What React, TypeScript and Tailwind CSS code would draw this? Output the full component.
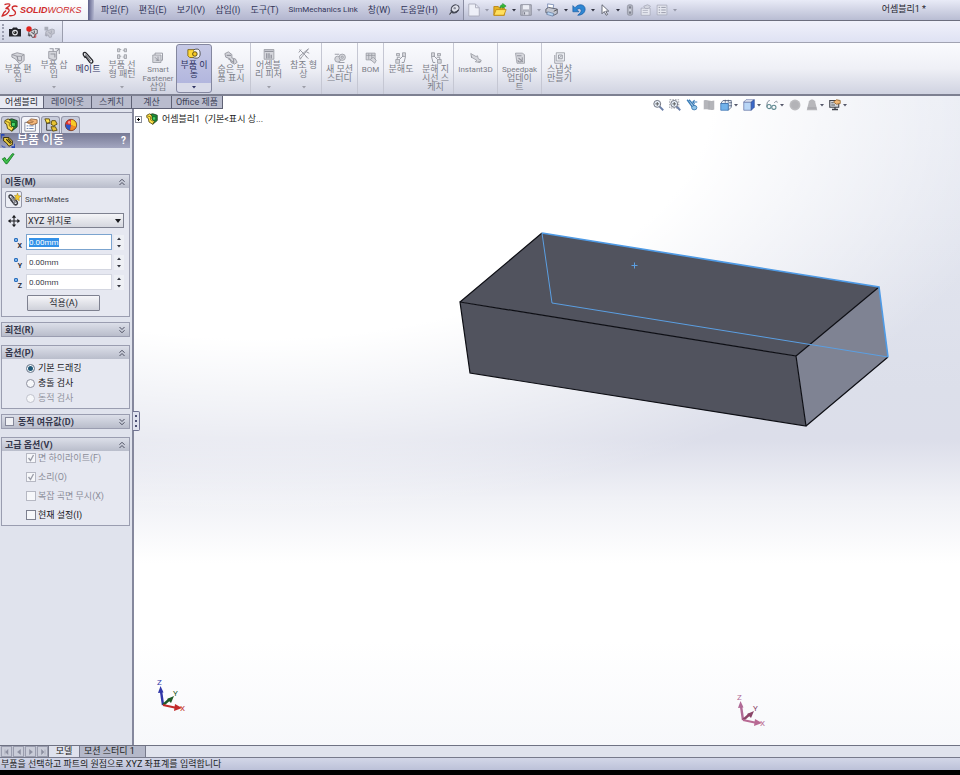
import React, { useEffect, useRef, useState } from 'react';

type IconProps = { className?: string };

const Svg = ({ className = 'size-3', children }: { className?: string; children: React.ReactNode }) => (
  <svg viewBox="0 0 16 16" className={`shrink-0 ${className}`} fill="none" aria-hidden="true">
    {children}
  </svg>
);

const Caret = ({ className = 'text-[#55586a]' }: IconProps) => (
  <svg viewBox="0 0 4 3" className={`h-[3px] w-1 shrink-0 ${className}`} aria-hidden="true">
    <path d="M0 0h4L2 2.5z" fill="currentColor" />
  </svg>
);

/* ---------- title bar icons ---------- */

const PinIcon = () => (
  <Svg>
    <path d="M2 14l4-5" stroke="#333" strokeWidth="1.4" />
    <ellipse cx="9.5" cy="6" rx="5.5" ry="4.5" transform="rotate(-35 9.5 6)" fill="#dfe1ea" stroke="#444754" strokeWidth="1.3" />
    <path d="M4 8c1 5 7 5 10 0" stroke="#444754" strokeWidth="1.8" />
    <circle cx="9" cy="5.5" r="1.6" fill="#8a8d9a" />
  </Svg>
);

const NewIcon = () => (
  <Svg className="h-3.5 w-3">
    <path d="M1 0h9l5 5v11H1z" fill="#eef0f8" stroke="#a9acbb" strokeWidth="1.2" />
    <path d="M10 0v5h5" stroke="#a9acbb" strokeWidth="1.2" />
  </Svg>
);

const OpenIcon = () => (
  <Svg className="size-3.5">
    <path d="M1 4h5l1 1.5h6V14H1z" fill="#e6b422" stroke="#b98412" />
    <path d="M3.5 7.500H15L12.500 14H1z" fill="#ffe05e" stroke="#c08c14" />
    <path d="M8 6c0-3 1-4 3-4V.5L15 3.5 11 6V4.500C9.500 4.500 9 5 8 6z" fill="#35b93a" stroke="#1b8a25" strokeWidth=".6" />
  </Svg>
);

const SaveIcon = () => (
  <Svg>
    <path d="M1 1h14v14H1z" fill="#b9bbc6" stroke="#8d909d" strokeWidth="1.3" />
    <path d="M4 1.5h8v5.5H4z" fill="#eceef5" />
    <path d="M4 9.5h8V15H4z" fill="#d9dbe4" stroke="#8d909d" strokeWidth=".8" />
    <path d="M6 11v3" stroke="#777a88" strokeWidth="1.5" />
  </Svg>
);

const PrintIcon = () => (
  <Svg className="size-3.5">
    <path d="M3 1l7 1-1 5-6-1z" fill="#fff" stroke="#7a8db5" />
    <path d="M1 7l3-2 10 2v5l-4 2-9-3z" fill="#c3c6d0" stroke="#555866" />
    <path d="M3 10l7 2-1 3-7-2z" fill="#b8d5f2" stroke="#62779c" strokeWidth=".8" />
    <path d="M10 9.5l4-2" stroke="#444" />
  </Svg>
);

const UndoIcon = () => (
  <Svg className="size-3.5">
    <path d="M1 3v7h7L5.600 7.600C7 6 10.500 6 10.500 8.500c0 2-1.500 3.500-4 5.500 5 0 8.500-3 8.500-7C15 1.500 7.500 0 3.400 5.400z" fill="#2e86d2" stroke="#1b5ca3" strokeWidth=".8" />
  </Svg>
);

const CursorIcon = () => (
  <Svg className="h-3.5 w-3">
    <path d="M4 1v12l3-3 2.5 5 2-1L9 9.5h4z" fill="#fff" stroke="#5a5d6b" strokeWidth="1.2" />
  </Svg>
);

const TrafficIcon = () => (
  <Svg>
    <rect x="4.5" y="1" width="7" height="14" rx="2.5" fill="#b0b3bf" stroke="#8b8e9b" />
    <circle cx="8" cy="4.5" r="1.5" fill="#7e818e" />
    <circle cx="8" cy="8" r="1.5" fill="#d5d7e0" />
    <circle cx="8" cy="11.5" r="1.5" fill="#7e818e" />
  </Svg>
);

const PropsIcon = () => (
  <Svg>
    <path d="M1.500 5.500h12V15h-12z" fill="#e6e8f0" stroke="#a4a7b5" />
    <path d="M3.500 8.500h7M3.500 11.500h7M5 3l5-2 4 2-3 3H7z" stroke="#a4a7b5" fill="#d3d5df" />
  </Svg>
);

const ListIcon = () => (
  <Svg>
    <path d="M1.500 1.500h13v13h-13z" stroke="#a4a7b5" fill="#e6e8f0" />
    <path d="M3.500 4.500h2M3.500 8h2M3.500 11.500h2M7 4.500h6M7 8h6M7 11.500h6" stroke="#8f92a1" strokeWidth="1.2" />
  </Svg>
);

/* ---------- macro bar icons ---------- */

const CameraIcon = () => (
  <Svg>
    <path d="M0 4h4l1.500-2h5L12 4h4v10H0z" fill="#23242a" />
    <circle cx="8" cy="8.800" r="3.800" fill="#e6e7ec" />
    <circle cx="8" cy="8.800" r="2.300" fill="#222" />
    <circle cx="7.300" cy="8" r=".8" fill="#fff" />
  </Svg>
);

const RecordIcon = ({ gray = false }: { gray?: boolean }) => (
  <Svg>
    <path d="M4 7l8-3 3 1v5l-3 1-1 4H8l-1-3-4 1z" fill={gray ? '#c5c7d1' : '#d9d9dd'} stroke={gray ? '#a0a3b0' : '#35363c'} />
    <path d="M7 8l4 3M11 6v4M5 10v4" stroke={gray ? '#a0a3b0' : '#35363c'} strokeWidth="1.2" />
    {gray ? <path d="M2 1h5v5H2z" fill="#a9acb8" /> : <circle cx="4" cy="4" r="3.6" fill="#e0221d" />}
    {!gray && <path d="M13 11v4h-3" stroke="#c22" />}
  </Svg>
);

/* ---------- ribbon icons ---------- */

const G = '#93959e';
const L = '#d5d6dc';

const EditPartIcon = () => (
  <Svg className="size-3.5">
    <path d="M1 4l6-2 8 2v7l-5 4-5-6-4-2z" fill={L} stroke={G} />
    <path d="M7 6h5v5H8zM1 4l6 2 1 5M12 6l3-2" stroke={G} />
  </Svg>
);

const InsertPartIcon = () => (
  <Svg className="size-3.5">
    <path d="M2 5h9v9l-3 1-6-2z" fill={L} stroke={G} />
    <path d="M3 2h4v3M9 2h5v6M4 8h5v4M11 5l3-3" stroke={G} strokeWidth="1.2" />
  </Svg>
);

const MateIcon = () => (
  <Svg className="size-3.5">
    <path d="M5 8L3 5c-1.500-3 1.500-4.500 3-2.500l7 8c1.500 2.500-1 4.500-3 2.500L5 6" stroke="#26272c" strokeWidth="1.500" />
    <path d="M5 4l6 7.500" stroke="#77797f" strokeWidth="1.500" />
  </Svg>
);

const PatternIcon = () => (
  <Svg>
    <path d="M2 1h3v4H2zM11 1h3v4h-3zM2 9h3v5H2zM11 9h3v5h-3z" fill={L} stroke={G} />
    <path d="M5 2h2M5 11h2M9 3h2M9 12h2" stroke={G} />
  </Svg>
);

const SmartIcon = () => (
  <Svg>
    <path d="M1 4h11v10H1z" fill={L} stroke={G} />
    <path d="M4 4V1.500h10V11h-2M4 7l4 4M8 6v6M5 11h5" stroke={G} strokeWidth="1.200" />
  </Svg>
);

const MoveIcon = () => (
  <Svg className="size-3.5">
    <path d="M1 3h7v9H3l-2-2z" fill="#ffd83b" stroke="#7c6210" />
    <path d="M8 3c6-2 7 1 7 5s-3 6-8 4" fill="#f2f2f2" stroke="#454545" />
    <circle cx="9" cy="8" r="2.600" fill="#f6c926" stroke="#4e3e0a" />
  </Svg>
);

const HiddenIcon = () => (
  <Svg className="size-3.5">
    <path d="M1 3l4-2 4 3v4l4 1 2 4-3 2-4-2-1-4-5-2z" fill={L} stroke={G} />
    <path d="M3 5h5M5 9l6 4M11 9v5" stroke={G} strokeWidth="1.200" />
  </Svg>
);

const FeatureIcon = () => (
  <Svg>
    <path d="M1.500 2h13v13h-13z" fill={L} stroke={G} />
    <path d="M2 4.500h12M5 7v7M8 7v7M11 9v5" stroke={G} strokeWidth="1.800" />
  </Svg>
);

const RefIcon = () => (
  <Svg>
    <path d="M2 2l10 10M14 1L5 12l-2 3-1-4zM10 11l4 3M1 6l3-4M11 5l4 2" stroke={G} strokeWidth="1.200" />
  </Svg>
);

const MotionIcon = () => (
  <Svg>
    <circle cx="5" cy="9.500" r="4" fill={L} stroke={G} />
    <circle cx="11" cy="7" r="4.200" fill={L} stroke={G} />
    <circle cx="11" cy="7" r="1.500" stroke={G} />
    <path d="M6 14h8M1 3h6" stroke={G} strokeWidth="1.200" />
  </Svg>
);

const BomIcon = () => (
  <Svg>
    <path d="M1.500 1.500h12v9h-12z" fill={L} stroke={G} />
    <path d="M1.500 4.500h12M5 2v8M9 2v8" stroke={G} />
    <path d="M7 10l4-3 4 4-2 4z" fill={L} stroke={G} />
  </Svg>
);

const ExplodeIcon = ({ flip = false }: { flip?: boolean }) => (
  <Svg>
    <g transform={flip ? 'translate(16 0) scale(-1 1)' : undefined}>
      <path d="M1 10h5v5H1zM10 1h4v5h-4zM2 2h4v3H2z" fill={L} stroke={G} />
      <path d="M6 10l5-5M7 7H3v3M14 6l-2 8H9" stroke={G} strokeWidth="1.200" />
    </g>
  </Svg>
);

const InstantIcon = () => (
  <Svg>
    <path d="M1 2l7 4 2-1 1 4 4 2-2 3-6-1 2-2-7-4z" fill={L} stroke={G} />
    <path d="M2 5v3M11 13h4" stroke={G} />
  </Svg>
);

const SpeedIcon = () => (
  <Svg>
    <path d="M2 1.500h9l3 2V15H4z" fill={L} stroke={G} />
    <path d="M4 5h6M6 8l6 5M11 7v4M5 11c1 3 4 3 5 1" stroke={G} strokeWidth="1.400" />
  </Svg>
);

const SnapshotIcon = () => (
  <Svg>
    <path d="M3 1h11v11H3z" fill="#eceef3" stroke={G} />
    <path d="M1 4v11h11M6 4h5v5H6zM7 8l3-3" stroke={G} strokeWidth="1.200" />
  </Svg>
);

/* ---------- property manager icons ---------- */

const PartIcon = ({ className = 'size-3.5' }: IconProps) => (
  <Svg className={className}>
    <path d="M5 2l4-1 6 2v7l-6 5-2-5z" fill="#1e8f3b" stroke="#12330f" />
    <path d="M1 3l4-2 3 3v4l3 3-2 4-5-3-1-5-2-1z" fill="#ffe24a" stroke="#4b3d09" />
    <path d="M8.500 5H13v4.500H8.500z" fill="#4ad465" stroke="#0d5a20" />
    <path d="M2 4l4 1v4l3 2" stroke="#7a6412" />
  </Svg>
);

const PropertyIcon = () => (
  <Svg className="size-3.5">
    <path d="M1 5h12v10H1z" fill="#fff" stroke="#7b7e8e" />
    <path d="M3 9h2M6 9h5M3 12h2M6 12h5" stroke="#5873ab" />
    <path d="M3 5l5-4 7 1v4l-6 2z" fill="#f3b67c" stroke="#7b4e24" strokeWidth=".8" />
    <path d="M4 5h6M7 3l4 1" stroke="#7b4e24" strokeWidth=".7" />
  </Svg>
);

const ConfigIcon = () => (
  <Svg className="size-3.5">
    <path d="M3 1v13h6M3 6h4" stroke="#333" />
    <path d="M1 1h5l1 4-4 1z" fill="#ffe24a" stroke="#594808" />
    <path d="M9 3h4l2 4-4 2-3-2zM8 10h5l2 4-5 1z" fill="#e8c334" stroke="#594808" />
  </Svg>
);

const AppearanceIcon = () => (
  <Svg className="size-3.5">
    <circle cx="8" cy="8" r="6.500" fill="#e8322a" />
    <path d="M8 8V1.500a6.500 6.500 0 016 9z" fill="#f6cb27" />
    <path d="M8 8L1.600 7a6.500 6.500 0 005.400 7.400z" fill="#2a55c9" />
    <path d="M8 8l-1 6.400a6.500 6.500 0 007-4z" fill="#f08a26" />
    <circle cx="6" cy="5" r="1.500" fill="#f79a8f" />
    <circle cx="8" cy="8" r="6.500" stroke="#66331f" strokeWidth=".8" />
  </Svg>
);

const HeaderIcon = () => (
  <Svg className="size-3.5">
    <path d="M0 5V1h4M16 11v4h-4" stroke="#2546b5" strokeWidth="1.800" />
    <path d="M3 4h6l4 4v4l-4 2-3-4-3-2z" fill="#f0cf3e" stroke="#2a2309" />
    <path d="M6 6l5 5M8 5l4 5" stroke="#3f3712" strokeWidth="1.300" />
    <path d="M1 13c0 2 2 2 4 2" stroke="#2546b5" />
  </Svg>
);

const CheckIcon = () => (
  <Svg className="size-3.5">
    <path d="M1.500 9l3-1.500L6.500 11 13 3l2 .5L7 14.500H5.500z" fill="#3fc04b" stroke="#137b22" />
  </Svg>
);

const SmartMatesIcon = () => (
  <Svg className="size-3.5">
    <path d="M6 9L2.500 5c-1-2.500 1.500-3.500 3-2l6 7c1.500 2.500-1 4.500-3 3L4 7.500" stroke="#3b3c42" strokeWidth="1.700" />
    <path d="M5 5l5 6M9 5l-1 8" stroke="#7d7f86" strokeWidth="1.400" />
    <path d="M12 0l1 3 3 .5-2.300 2L14 9l-2.500-2L9 8l1-3-1.500-2.300 2.500.1z" fill="#f5cb2c" stroke="#94720e" strokeWidth=".5" />
  </Svg>
);

const FourWayIcon = () => (
  <Svg>
    <path d="M8 1v14M1 8h14" stroke="#1d1e22" strokeWidth="1.400" />
    <path d="M8 0l3 3.500H5zM8 16l3-3.500H5zM0 8l3.500-3v6zM16 8l-3.500-3v6z" fill="#1d1e22" />
  </Svg>
);

const Chevrons = ({ down }: { down: boolean }) => (
  <Svg className={`size-2 ${down ? 'rotate-180' : ''}`}>
    <path d="M3 7.500l5-5 5 5M3 14l5-5 5 5" stroke="#4b4e60" strokeWidth="2" />
  </Svg>
);

/* ---------- heads-up view icons ---------- */

const ZoomIcon = ({ area = false }: { area?: boolean }) => (
  <Svg>
    {area && <path d="M1 1h12v11H1z" stroke="#777a86" strokeDasharray="2 1.500" />}
    <path d="M10 10l5 5" stroke="#6b7fa8" strokeWidth="2.400" />
    <circle cx="7" cy="6.500" r="4.600" fill="#e9f1fa" stroke="#70737f" strokeWidth="1.300" />
    <path d="M7 4v5M4.500 6.500h5" stroke="#555" strokeWidth="1.200" />
  </Svg>
);

const PrevViewIcon = () => (
  <Svg>
    <path d="M1.500 1l8 11M4 1l8 9" stroke="#3d7fb9" strokeWidth="1.800" />
    <ellipse cx="11" cy="11.500" rx="3.500" ry="3" fill="#8fc3e8" stroke="#2f6ea5" />
    <path d="M15 4H9l2.500-2.500M9 4l2.500 2.500" stroke="#3d7fb9" strokeWidth="1.400" />
  </Svg>
);

const SectionIcon = () => (
  <Svg>
    <path d="M1 2c5-2 8 2 14 0v12c-5 2-9-1-14 0z" fill="#b4b5ba" />
    <path d="M8 3v11" stroke="#a2a3a9" />
  </Svg>
);

const OrientIcon = () => (
  <Svg>
    <path d="M4 2h11v9l-4 4V6H1z" fill="#e8eef6" stroke="#4b5a78" />
    <path d="M1 6h10v9H1z" fill="#72b2ea" stroke="#3b71b0" />
    <path d="M7 1v4M11 1v4M12 5h4M12 9h4" stroke="#4b5a78" />
  </Svg>
);

const StyleIcon = () => (
  <Svg>
    <path d="M1 4h10v11H1z" fill="#b9d6f6" stroke="#6877a5" />
    <path d="M1 4l3-3h11l-4 3z" fill="#f2f6fd" stroke="#6877a5" />
    <path d="M11 4l4-3v10l-4 4z" fill="#3867c8" stroke="#34529b" />
  </Svg>
);

const GlassesIcon = () => (
  <Svg>
    <path d="M5 2C1 3 1 7 1.500 11M11 5c3-3 4-2 4 0" stroke="#737f8c" strokeWidth="1.200" />
    <circle cx="4" cy="10" r="2.800" stroke="#5d8890" strokeWidth="1.400" />
    <circle cx="10.500" cy="11" r="2.800" stroke="#5d8890" strokeWidth="1.400" />
  </Svg>
);

const SphereIcon = () => (
  <Svg>
    <circle cx="8" cy="8" r="7.300" fill="#bcbcbf" />
    <circle cx="8" cy="8" r="5" fill="#b3b3b7" />
  </Svg>
);

const SceneIcon = () => (
  <Svg>
    <path d="M4 3c2-3 6-3 8 0l3 12H1z" fill="#b7b7bb" />
    <path d="M2 12h12" stroke="#a3a3a8" strokeWidth="1.500" />
  </Svg>
);

const MonitorIcon = () => (
  <Svg>
    <path d="M1 2h12v9H1z" fill="#d5d8de" stroke="#3f4149" strokeWidth="1.400" />
    <path d="M4 14h8M8 11v3" stroke="#3f4149" strokeWidth="1.800" />
    <path d="M6 4l4-3 5 1v4l-5 1z" fill="#f1b877" stroke="#8a5c26" />
    <path d="M3 5h3M3 8h5" stroke="#333" />
  </Svg>
);

/* ---------- data ---------- */

const menus = ['파일(F)', '편집(E)', '보기(V)', '삽입(I)', '도구(T)', 'SimMechanics Link', '창(W)', '도움말(H)'];

const quickTools = [
  { label: '새 문서', icon: <NewIcon />, caret: 'gray' },
  { label: '열기', icon: <OpenIcon />, caret: 'dark' },
  { label: '저장', icon: <SaveIcon />, caret: 'gray' },
  { label: '인쇄', icon: <PrintIcon />, caret: 'dark' },
  { label: '실행 취소', icon: <UndoIcon />, caret: 'dark' },
  { label: '선택', icon: <CursorIcon />, caret: 'dark' },
  { label: '재생성', icon: <TrafficIcon />, caret: '' },
  { label: '파일 속성', icon: <PropsIcon />, caret: '' },
  { label: '옵션', icon: <ListIcon />, caret: 'gray' },
];

const ribbon = [
  { lines: ['부품 편', '집'], icon: <EditPartIcon />, width: 'w-9' },
  { lines: ['부품 삽', '입'], icon: <InsertPartIcon />, width: 'w-9', drop: true },
  { lines: ['메이트'], icon: <MateIcon />, width: 'w-8', enabled: true },
  { lines: ['부품 선', '형 패턴'], icon: <PatternIcon />, width: 'w-9', drop: true },
  { lines: ['Smart', 'Fastener', '삽입'], icon: <SmartIcon />, width: 'w-9' },
  { lines: ['부품 이', '동'], icon: <MoveIcon />, width: 'w-9', drop: true, active: true, enabled: true },
  { lines: ['숨은 부', '품 표시'], icon: <HiddenIcon />, width: 'w-[38px]', sep: true },
  { lines: ['어셈블', '리 피처'], icon: <FeatureIcon />, width: 'w-[35px]', drop: true },
  { lines: ['참조 형', '상'], icon: <RefIcon />, width: 'w-[35px]', drop: true, sep: true },
  { lines: ['새 모션', '스터디'], icon: <MotionIcon />, width: 'w-[35px]', sep: true },
  { lines: ['BOM'], icon: <BomIcon />, width: 'w-[25px]', sep: true },
  { lines: ['분해도'], icon: <ExplodeIcon />, width: 'w-[34px]' },
  { lines: ['분해 지', '시선 스', '케치'], icon: <ExplodeIcon flip />, width: 'w-[35px]', sep: true },
  { lines: ['Instant3D'], icon: <InstantIcon />, width: 'w-[43px]', sep: true },
  { lines: ['Speedpak', '업데이', '트'], icon: <SpeedIcon />, width: 'w-[43px]', sep: true },
  { lines: ['스냅샷', '만들기'], icon: <SnapshotIcon />, width: 'w-[35px]' },
];

const commandTabs = [
  { label: '어셈블리', width: 'w-[44px]' },
  { label: '레이아웃', width: 'w-12' },
  { label: '스케치', width: 'w-10' },
  { label: '계산', width: 'w-10' },
  { label: 'Office 제품', width: 'w-[51px]' },
];

const viewTools = [
  { label: '전체 보기', icon: <ZoomIcon /> },
  { label: '영역 확대', icon: <ZoomIcon area /> },
  { label: '이전 뷰', icon: <PrevViewIcon /> },
  { label: '단면도', icon: <SectionIcon /> },
  { label: '뷰 방향', icon: <OrientIcon />, drop: true },
  { label: '표시 유형', icon: <StyleIcon />, drop: true },
  { label: '항목 숨기기/보이기', icon: <GlassesIcon />, drop: true },
  { label: '표현 편집', icon: <SphereIcon /> },
  { label: '화면 적용', icon: <SceneIcon />, drop: true },
  { label: '뷰 설정', icon: <MonitorIcon />, drop: true },
];

const managerTabs = [
  { label: 'FeatureManager', icon: <PartIcon /> },
  { label: 'PropertyManager', icon: <PropertyIcon /> },
  { label: 'ConfigurationManager', icon: <ConfigIcon /> },
  { label: 'DisplayManager', icon: <AppearanceIcon /> },
];

/* ---------- top bars ---------- */

const TitleBar = () => (
  <header className="flex h-[21px] items-stretch border-b border-[#6c6e7e] bg-gradient-to-b from-[#e9ebf7] to-[#b9bdd3]">
    <div className="flex w-[88px] shrink-0 items-center gap-0.5 bg-gradient-to-b from-white to-[#f1f1f6] pl-px">
      <svg viewBox="0 0 50 48" className="h-4 w-[17px]" fill="none" stroke="#cf2a2a" strokeWidth="4" aria-hidden="true">
        <path d="M10 8c6-3 17-4 16 1-1 4-8 8-13 11 9-2 14 3 9 10-4 6-11 11-19 12 2-8 6-13 12-16" />
        <path d="M49 14c-8-4-17-1-16 5 1 5 11 7 10 14-1 6-9 9-19 8" />
      </svg>
      <span className="font-['Liberation_Sans'] text-[9px] leading-3 text-[#cf2a2a] italic">
        <b>SOLID</b>WORKS
      </span>
    </div>
    <div className="w-1.5 shrink-0 bg-gradient-to-r from-[#5d6089] to-[#b4b7d0]" />
    <nav className="flex shrink-0 items-center gap-2.5 border-r border-[#8a8da2] bg-gradient-to-b from-[#d8dbea] to-[#b3b6cf] pr-[3px] pl-[7px]">
      {menus.map((menu) => (
        <button key={menu} className={`leading-3 whitespace-nowrap text-[#33365a] ${menu.startsWith('Sim') ? 'text-[8px]' : 'text-[9px]'}`}>
          {menu}
        </button>
      ))}
      <button aria-label="메뉴 고정">
        <PinIcon />
      </button>
    </nav>
    <div className="flex items-center gap-1 pl-1">
      {quickTools.map((tool) => (
        <button key={tool.label} aria-label={tool.label} className="flex items-center gap-[5px]">
          {tool.icon}
          {tool.caret && <Caret className={tool.caret === 'dark' ? 'text-[#2f3140]' : 'text-[#9598a8]'} />}
        </button>
      ))}
    </div>
    <div className="flex flex-1 items-center justify-end pr-[34px] text-[9px] text-[#24252d]">어셈블리1 *</div>
  </header>
);

const MacroBar = () => (
  <div className="flex h-[22px] border-b border-[#a1a3b2] bg-gradient-to-b from-[#f0f1fb] to-[#dfe2f3]">
    <div className="flex w-[63px] items-center gap-[5px] border-r border-[#9b9eae] bg-gradient-to-b from-[#eceef9] to-[#cfd3e3] pl-0.5">
      <div className="h-4 border-l-2 border-dotted border-[#9b9eb0]" />
      <button aria-label="캡처"><CameraIcon /></button>
      <button aria-label="매크로 기록"><RecordIcon /></button>
      <button aria-label="매크로 정지"><RecordIcon gray /></button>
    </div>
  </div>
);

const Ribbon = () => (
  <div className="flex h-[53px] items-stretch border-b-2 border-[#7d8091] bg-gradient-to-b from-[#fafbfe] via-[#eff0f6] to-[#d0d3e1]">
    {ribbon.map((item) => (
      <div key={item.lines.join('')} className={`flex shrink-0 ${item.sep ? 'border-r border-[#c5c7d3]' : ''}`}>
        <button
          className={`flex flex-col items-center text-[9px] leading-[9px] whitespace-nowrap ${item.width} ${
            item.active ? 'my-px rounded-[3px] border border-[#84879f] bg-gradient-to-b from-[#c6c9e6] to-[#aeb2dc] pt-[3px]' : item.drop ? 'pt-[5px]' : 'pt-[9px]'
          } ${item.enabled ? 'text-[#2d3160]' : 'text-[#7b7d87]'}`}
        >
          <span className="flex h-3 items-center">{item.icon}</span>
          <span className="mt-px">
            {item.lines.map((line) => (
              <span key={line} className={`block ${/[a-zA-Z]/.test(line) ? 'text-[8px]' : ''}`}>
                {line}
              </span>
            ))}
          </span>
          {item.drop && (
            <span className={`mt-auto flex w-full justify-center ${item.active ? 'rounded-b-[3px] bg-[#d9dbe9] py-[3px]' : 'pb-[5px]'}`}>
              <Caret className={item.active ? 'text-[#2d3160]' : 'text-[#9c9ea8]'} />
            </span>
          )}
        </button>
      </div>
    ))}
  </div>
);

/* ---------- property manager ---------- */

type GroupProps = {
  title: string;
  open?: boolean;
  check?: boolean;
  children?: React.ReactNode;
};

const Group = ({ title, open = false, check = false, children }: GroupProps) => (
  <section className="border border-[#9a9db0] bg-[#e6e8f1]">
    <div className="flex h-[13px] items-center bg-gradient-to-b from-[#dcdfe9] to-[#b9bdcb] px-[3px]">
      {check ? (
        <label className="flex flex-1 items-center gap-1 text-[9px] leading-3 font-bold text-[#35384c]">
          <input type="checkbox" className="size-[9px] appearance-none border border-[#85889a] bg-[#f0f1f5]" />
          {title}
        </label>
      ) : (
        <h3 className="flex-1 text-[9px] leading-3 font-bold text-[#35384c]">{title}</h3>
      )}
      <button aria-label={`${title} 펼치기`}>
        <Chevrons down={!open} />
      </button>
    </div>
    {open && children}
  </section>
);

const CoordInput = ({ axis, focused = false }: { axis: string; focused?: boolean }) => {
  const ref = useRef<HTMLInputElement>(null);

  useEffect(() => {
    if (focused) {
      ref.current?.focus();
      ref.current?.select();
    }
  }, [focused]);

  return (
    <div className="flex items-center">
      <label htmlFor={`axis-${axis}`} className="flex w-[21px] shrink-0 items-center justify-end pr-1 text-[7px] leading-3 font-bold text-[#2b2d3a]">
        <span className="mb-1 size-1 rounded-[1px] border border-[#2c6fbd] bg-[#7fb6ea]" />
        <span className="mt-2 leading-1">{axis}</span>
      </label>
      <input
        id={`axis-${axis}`}
        ref={ref}
        defaultValue="0.00mm"
        className={`h-4 w-0 flex-1 border bg-white px-0.5 text-[8px] leading-3 text-[#3c3e4a] outline-none selection:bg-[#3391e8] selection:text-white ${
          focused ? 'border-[#7ba4cf]' : 'border-[#d3d6e0]'
        }`}
      />
      <div className="ml-0.5 flex h-[15px] w-2.5 flex-col items-center justify-between bg-[#eef0f5] py-0.5">
        <button aria-label={`${axis} 증가`}><Caret className="rotate-180 text-[#33353f]" /></button>
        <button aria-label={`${axis} 감소`}><Caret className="text-[#33353f]" /></button>
      </div>
    </div>
  );
};

const dragModes = [
  { label: '기본 드래깅', disabled: false },
  { label: '충돌 검사', disabled: false },
  { label: '동적 검사', disabled: true },
];

const advanced = [
  { label: '면 하이라이트(F)', checked: true, disabled: true },
  { label: '소리(O)', checked: true, disabled: true },
  { label: '복잡 곡면 무시(X)', checked: false, disabled: true },
  { label: '현재 설정(I)', checked: false, disabled: false },
];

const PropertyPanel = () => {
  const [mode, setMode] = useState('기본 드래깅');

  return (
    <aside className="relative z-10 flex w-[134px] shrink-0 flex-col border-r-2 border-[#85889d] bg-[#e0e3ed] pt-4">
      <div className="flex gap-px border-t border-[#8d90a3] px-px pt-[3px]">
        {managerTabs.map((tab, index) => (
          <button
            key={tab.label}
            aria-label={tab.label}
            className={`flex h-[17px] w-[19px] items-center justify-center rounded-t-[3px] border border-b-0 border-[#9497aa] ${
              index === 1 ? 'bg-[#f4f5fa]' : 'bg-[#c8ccdb]'
            }`}
          >
            {tab.icon}
          </button>
        ))}
      </div>
      <div className="mr-0.5 flex h-[15px] items-center gap-0.5 bg-gradient-to-b from-[#777a95] to-[#a3a6c0] pl-px">
        <HeaderIcon />
        <h2 className="flex-1 text-[12px] leading-[15px] font-medium text-white">부품 이동</h2>
        <button aria-label="도움말" className="pr-1 text-[10px] leading-3 font-bold text-white">?</button>
      </div>
      <div className="flex h-[26px] items-start pt-[3px] pl-px">
        <button aria-label="확인"><CheckIcon /></button>
      </div>

      <div className="flex flex-col gap-[5px] pr-0.5 pl-px">
        <Group title="이동(M)" open>
          <div className="flex flex-col pt-[3px] pb-[5px]">
            <div className="flex items-center gap-[3px] pl-[3px]">
              <button aria-label="SmartMates" className="flex size-[17px] items-center justify-center rounded-[2px] border border-[#9598a8] bg-[#eceef5]">
                <SmartMatesIcon />
              </button>
              <span className="text-[8px] leading-3 text-[#3c3e4a]">SmartMates</span>
            </div>
            <div className="mt-[5px] flex items-center gap-[6px] pr-[5px] pl-[6px]">
              <FourWayIcon />
              <div className="relative flex-1">
                <select
                  aria-label="이동 방법"
                  className="block h-[15px] w-full appearance-none border border-[#7e8190] bg-gradient-to-b from-[#f5f5f8] to-[#d5d7df] pl-px text-[9px] leading-3 text-[#26272f]"
                >
                  <option>XYZ 위치로</option>
                </select>
                <svg viewBox="0 0 6 4" className="pointer-events-none absolute top-[6px] right-[3px] h-1 w-1.5" aria-hidden="true">
                  <path d="M0 0h6L3 4z" fill="#17181c" />
                </svg>
              </div>
            </div>
            <div className="mt-1.5 flex flex-col gap-1 pr-[5px] pl-[3px]">
              <CoordInput axis="X" focused />
              <CoordInput axis="Y" />
              <CoordInput axis="Z" />
            </div>
            <button className="mt-[5px] ml-[25px] h-4 w-[73px] rounded-[1px] border border-[#7e8190] bg-gradient-to-b from-[#f6f6f9] to-[#cfd1da] text-[9px] leading-3 text-[#26272f]">
              적용(A)
            </button>
          </div>
        </Group>

        <Group title="회전(R)" />

        <div className="pt-[3px]">
          <Group title="옵션(P)" open>
            <div className="flex flex-col gap-[3px] pt-[3px] pb-1 pl-6">
              {dragModes.map(({ label, disabled }) => (
                <label key={label} className={`flex items-center gap-[3px] text-[9px] leading-3 ${disabled ? 'text-[#9193a0]' : 'text-[#16171c]'}`}>
                  <input
                    type="radio"
                    name="drag"
                    disabled={disabled}
                    checked={mode === label}
                    onChange={() => setMode(label)}
                    className="size-[9px] appearance-none rounded-full border border-[#8e919f] bg-[#f6f7fa] checked:bg-[#1e5878] checked:ring-1 checked:ring-white checked:ring-inset disabled:border-[#c0c2cc]"
                  />
                  {label}
                </label>
              ))}
            </div>
          </Group>
        </div>

        <Group title="동적 여유값(D)" check />

        <div className="pt-[3px]">
          <Group title="고급 옵션(V)" open>
            <div className="flex flex-col gap-[7px] pt-px pb-1 pl-6">
              {advanced.map(({ label, checked, disabled }) => (
                <label key={label} className={`flex items-center gap-0.5 text-[9px] leading-3 ${disabled ? 'text-[#8b8d99]' : 'text-[#16171c]'}`}>
                  <span className="relative size-[10px]">
                    <input
                      type="checkbox"
                      defaultChecked={checked}
                      disabled={disabled}
                      className="peer block size-[10px] appearance-none border border-[#7d808f] bg-[#f6f7fa] disabled:border-[#b6b8c3]"
                    />
                    <svg viewBox="0 0 10 10" className="pointer-events-none absolute inset-0 hidden size-[10px] peer-checked:block" aria-hidden="true">
                      <path d="M2.500 5l2 2.500 3-5.500" fill="none" stroke="#9a9ca8" strokeWidth="1.300" />
                    </svg>
                  </span>
                  {label}
                </label>
              ))}
            </div>
          </Group>
        </div>
      </div>

      {/* splitter grip */}
      <button
        aria-label="패널 접기"
        className="absolute top-[315px] -right-2 flex h-5 w-[7px] flex-col items-center justify-center gap-[3px] rounded-r-[2px] border border-l-0 border-[#6f7291] bg-[#dfe2ee]"
      >
        <span className="size-0.5 bg-[#4d5175]" />
        <span className="size-0.5 bg-[#4d5175]" />
        <span className="size-0.5 bg-[#4d5175]" />
      </button>
    </aside>
  );
};

/* ---------- graphics area ---------- */

const Triad = ({ x, y, colors }: { x: number; y: number; colors: string[] }) => {
  const [cx, cy, cz] = colors;
  return (
    <g transform={`translate(${x} ${y})`} className="text-[8px]">
      <path d="M0 0l-2-14" stroke={cz} strokeWidth="2.400" />
      <path d="M-5-12l2.500-7 3 6.500z" fill={cz} />
      <path d="M0 0l7-6" stroke={cy} strokeWidth="2.400" />
      <path d="M4-6l7-3-3 7z" fill={cy} />
      <path d="M0 0l14 3" stroke={cx} strokeWidth="2.200" />
      <path d="M12-1l7 4-8 3z" fill={cx} />
      <text x="-6" y="-20" fill={cz}>Z</text>
      <text x="10" y="-9" fill={cy}>Y</text>
      <text x="17" y="6" fill={cx}>X</text>
    </g>
  );
};

const Model = () => (
  <svg viewBox="134 96 826 649" preserveAspectRatio="xMinYMin meet" className="absolute inset-0 size-full" role="img" aria-label="모델">
    <path d="M542 233l337 54-83 69-336-54z" fill="#51535e" />
    <path d="M460 302l336 54 10 70-336-53z" fill="#51535e" />
    <path d="M796 356l83-69 9 70-82 69z" fill="#7f8393" />
    <path d="M460 302l82-69M460 302l336 54 10 70-336-53zM796 356l83-69M806 426l82-69" fill="none" stroke="#0d0e14" strokeWidth="1.200" />
    <path d="M542 233l337 54 9 70" fill="none" stroke="#4f9be6" strokeWidth="1.600" />
    <path d="M542 233l10 70 336 54M631.500 265.500h6M634.500 262.500v6" fill="none" stroke="#5b9fe2" />
    <Triad x={163} y={705} colors={['#c22a2a', '#1e5a26', '#3036a8']} />
    <Triad x={743} y={720} colors={['#b86a94', '#8a4468', '#b06a96']} />
  </svg>
);

const Viewport = () => (
  <main className="relative flex-1 overflow-hidden bg-[radial-gradient(ellipse_100%_68%_at_15%_0%,#fff_55%,transparent_95%),linear-gradient(to_bottom,#e6e9f2_0%,#dcdfea_45%,#dcdeea_53%,#f0f1f6_62%,#fff_72%,#fff_84%,#f7f8fb_100%)]">
    <Model />
    <div className="relative flex justify-between pr-[113px]">
      <div className="flex items-center gap-1 pt-[17px] pl-px text-[9px] leading-3 text-[#1d1e24]">
        <button aria-label="펼치기" className="relative flex size-[7px] items-center justify-center border border-[#8b8e9b] bg-white">
          <span className="absolute h-px w-[3px] bg-black" />
          <span className="absolute h-[3px] w-px bg-black" />
        </button>
        <PartIcon className="size-3" />
        <span className="whitespace-pre">어셈블리1  (기본&lt;표시 상...</span>
      </div>
      <div className="flex items-start gap-[5px] pt-[3px]">
        {viewTools.map((tool) => (
          <button key={tool.label} aria-label={tool.label} className="flex items-center gap-0.5">
            {tool.icon}
            {tool.drop && <Caret />}
          </button>
        ))}
      </div>
    </div>
  </main>
);

const BottomBar = () => (
  <div className="flex h-3 items-stretch border-t border-[#6f7283] bg-[#e0e3ed] text-[9px] leading-[11px]">
    <div className="flex gap-px bg-[#c3c6d3] pl-px">
      {['M10 3v10L5 8zM4 3v10', 'M11 3v10L5 8z', 'M5 3v10l6-5z', 'M5 3v10l5-5zM12 3v10'].map((d) => (
        <button key={d} aria-label="탭 이동" className="flex w-[11px] items-center justify-center border border-[#9a9dae] bg-[#c9ccd8]">
          <Svg className="size-2">
            <path d={d} fill="#8a8d9e" stroke="#8a8d9e" />
          </Svg>
        </button>
      ))}
    </div>
    <button className="w-8 border-x border-[#777a8b] bg-[#dfe2ed] text-[#1c1d22]">모델</button>
    <button className="w-[66px] border-r border-[#777a8b] bg-[#b4b8c9] pl-1 text-left text-[#1c1d22]">모션 스터디 1</button>
  </div>
);

const App = () => (
  <div className="flex min-h-screen flex-col bg-[#e0e3ed] font-[Roboto,'Noto_Sans_CJK_KR',sans-serif] text-[9px]">
    <TitleBar />
    <MacroBar />
    <Ribbon />
    <div className="relative flex flex-1">
      <PropertyPanel />
      <Viewport />
      {/* command tabs hang over the top of both panes */}
      <div className="absolute top-0 left-0 z-20 flex h-[13px] border-b border-[#5f6275]">
        {commandTabs.map((tab, index) => (
          <button
            key={tab.label}
            className={`border-r border-[#5f6275] text-[9px] leading-3 whitespace-nowrap ${tab.width} ${
              index === 0 ? 'bg-[#e8eaf3] text-[#24252d]' : 'bg-[#b9bccd] text-[#41445a]'
            }`}
          >
            {tab.label}
          </button>
        ))}
      </div>
    </div>
    <BottomBar />
    <footer className="flex h-[18px] flex-col border-t border-[#777a8b] bg-black">
      <div className="h-3 bg-gradient-to-b from-[#d3d7e8] to-[#bcc1d8] pl-px text-[9px] leading-3 text-[#1c1d22]">
        부품을 선택하고 파트의 원점으로 XYZ 좌표계를 입력합니다
      </div>
    </footer>
  </div>
);

export default App;
